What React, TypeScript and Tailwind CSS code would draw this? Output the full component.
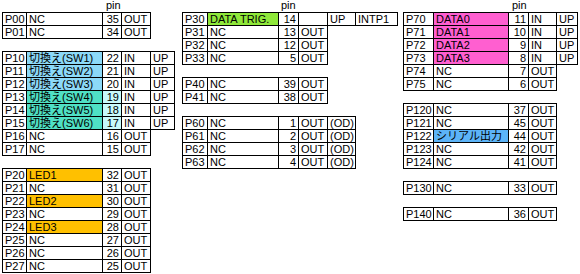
import clsx from 'clsx';

type Cell = { t?: string; bg?: string };
type Row = Cell[];

// column widths (include right border)
const LEFT = ['w-[24px]', 'w-[76px]', 'w-[19px]', 'w-[29px]', 'w-[24px]'];
const MID = ['w-[25px]', 'w-[71px]', 'w-[20px]', 'w-[29px]', 'w-[28px]', 'w-[42px]'];
const RIGHT = ['w-[30px]', 'w-[75px]', 'w-[20px]', 'w-[28px]', 'w-[21px]'];

const SW_A = 'bg-[#8cd9f8]';
const SW_B = 'bg-[#4fe0c4]';
const PIN_B = 'bg-[#c8fafa]';
const LED = 'bg-[#ffc000]';
const PINK = 'bg-[#ff5fd0]';

const r = (...cells: (string | Cell)[]): Row =>
  cells.map((c) => (typeof c === 'string' ? { t: c } : c));

const leftBlocks: Row[][] = [
  [r('P00', 'NC', '35', 'OUT'), r('P01', 'NC', '34', 'OUT')],
  [
    r('P10', { t: '切換え(SW1)', bg: SW_A }, '22', 'IN', 'UP'),
    r('P11', { t: '切換え(SW2)', bg: SW_A }, '21', 'IN', 'UP'),
    r('P12', { t: '切換え(SW3)', bg: SW_A }, '20', 'IN', 'UP'),
    r('P13', { t: '切換え(SW4)', bg: SW_B }, { t: '19', bg: PIN_B }, 'IN', 'UP'),
    r('P14', { t: '切換え(SW5)', bg: SW_B }, { t: '18', bg: PIN_B }, 'IN', 'UP'),
    r('P15', { t: '切換え(SW6)', bg: SW_B }, { t: '17', bg: PIN_B }, 'IN', 'UP'),
    r('P16', 'NC', '16', 'OUT'),
    r('P17', 'NC', '15', 'OUT'),
  ],
  [
    r('P20', { t: 'LED1', bg: LED }, '32', 'OUT'),
    r('P21', 'NC', '31', 'OUT'),
    r('P22', { t: 'LED2', bg: LED }, '30', 'OUT'),
    r('P23', 'NC', '29', 'OUT'),
    r('P24', { t: 'LED3', bg: LED }, '28', 'OUT'),
    r('P25', 'NC', '27', 'OUT'),
    r('P26', 'NC', '26', 'OUT'),
    r('P27', 'NC', '25', 'OUT'),
  ],
];

const midBlocks: Row[][] = [
  [
    r('P30', { t: 'DATA TRIG.', bg: 'bg-[#8fe83a]' }, '14', '', 'UP', 'INTP1'),
    r('P31', 'NC', '13', 'OUT'),
    r('P32', 'NC', '12', 'OUT'),
    r('P33', 'NC', '5', 'OUT'),
  ],
  [r('P40', 'NC', '39', 'OUT'), r('P41', 'NC', '38', 'OUT')],
  [
    r('P60', 'NC', '1', 'OUT', '(OD)'),
    r('P61', 'NC', '2', 'OUT', '(OD)'),
    r('P62', 'NC', '3', 'OUT', '(OD)'),
    r('P63', 'NC', '4', 'OUT', '(OD)'),
  ],
];

const rightBlocks: Row[][] = [
  [
    r('P70', { t: 'DATA0', bg: PINK }, '11', 'IN', 'UP'),
    r('P71', { t: 'DATA1', bg: PINK }, '10', 'IN', 'UP'),
    r('P72', { t: 'DATA2', bg: PINK }, '9', 'IN', 'UP'),
    r('P73', { t: 'DATA3', bg: PINK }, '8', 'IN', 'UP'),
    r('P74', 'NC', '7', 'OUT'),
    r('P75', 'NC', '6', 'OUT'),
  ],
  [
    r('P120', 'NC', '37', 'OUT'),
    r('P121', 'NC', '45', 'OUT'),
    r('P122', { t: 'シリアル出力', bg: 'bg-[#5cb4f8]' }, '44', 'OUT'),
    r('P123', 'NC', '42', 'OUT'),
    r('P124', 'NC', '41', 'OUT'),
  ],
  [r('P130', 'NC', '33', 'OUT')],
  [r('P140', 'NC', '36', 'OUT')],
];

function Block({ rows, cols }: { rows: Row[]; cols: string[] }) {
  return (
    <div className="flex flex-col items-start">
      {rows.map((row, i) => (
        <div key={i} className="flex border-l border-black">
          {row.map((c, j) => (
            <div
              key={j}
              className={clsx(
                'flex shrink-0 items-center overflow-hidden whitespace-nowrap border-r border-b border-black',
                cols[j],
                i === 0 ? 'h-[14px] border-t' : 'h-[13px]',
                j === 2 ? 'justify-end pr-[2px]' : 'pl-[2px]',
                c.bg ?? 'bg-white'
              )}
            >
              {c.t}
            </div>
          ))}
        </div>
      ))}
    </div>
  );
}

function Group({
  blocks,
  cols,
  pinPad,
  className,
}: {
  blocks: Row[][];
  cols: string[];
  pinPad: string;
  className?: string;
}) {
  return (
    <div className={clsx('flex flex-col', className)}>
      <div className={clsx('h-[12px] leading-[11px]', pinPad)}>pin</div>
      <div className="flex flex-col gap-[12px]">
        {blocks.map((b, i) => (
          <Block key={i} rows={b} cols={cols} />
        ))}
      </div>
    </div>
  );
}

export default function App() {
  return (
    <div className="flex h-[274px] w-[580px] items-start bg-white pl-[2px] text-[11px] leading-[12px] text-black [font-family:'Liberation_Sans','Noto_Sans_CJK_JP',sans-serif]">
      <Group blocks={leftBlocks} cols={LEFT} pinPad="pl-[104px]" className="w-[173px]" />
      <Group blocks={midBlocks} cols={MID} pinPad="pl-[99px]" className="ml-[7px] w-[216px]" />
      <Group blocks={rightBlocks} cols={RIGHT} pinPad="pl-[109px]" className="ml-[5px] w-[175px]" />
    </div>
  );
}
